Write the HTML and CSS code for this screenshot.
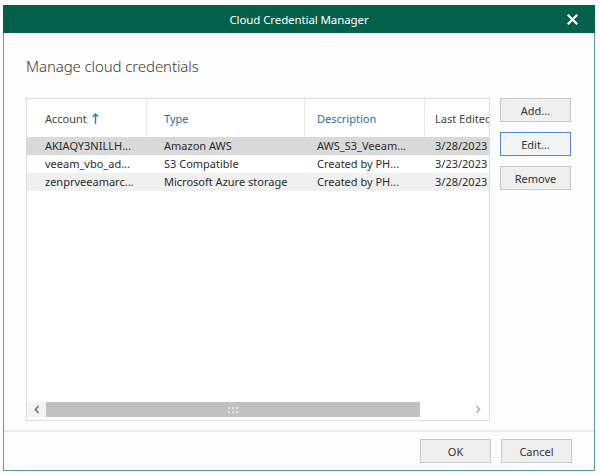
FILE: index.html
```html
<!DOCTYPE html>
<html>
<head>
<meta charset="utf-8">
<link rel="stylesheet" href="styles.css">
</head>
<body>
<div class="window">
  <div class="titlebar">
    <span class="title">Cloud Credential Manager</span>
    <span class="close">
      <svg width="11" height="11" viewBox="0 0 11 11"><path d="M1.5 1.5 L9.5 9.5 M9.5 1.5 L1.5 9.5" stroke="#fff" stroke-width="2.2" stroke-linecap="square"/></svg>
    </span>
  </div>
  <div class="content">
    <h1 class="heading">Manage cloud credentials</h1>
    <div class="main">
      <div class="list">
        <div class="grid">
          <div class="row header">
            <div class="cell c1 hdr-dark">Account <svg class="arrow" width="7" height="11" viewBox="0 0 7 11"><path d="M3.5 1 V11 M0.8 3.8 L3.5 1 L6.2 3.8" fill="none" stroke="#2a7ec4" stroke-width="1.4"/></svg></div>
            <div class="cell c2 hdr-blue">Type</div>
            <div class="cell c3 hdr-blue">Description</div>
            <div class="cell c4 hdr-dark">Last Edited</div>
          </div>
          <div class="row item selected">
            <div class="cell c1">AKIAQY3NILLH...</div>
            <div class="cell c2">Amazon AWS</div>
            <div class="cell c3">AWS_S3_Veeam...</div>
            <div class="cell c4">3/28/2023 9:14 AM</div>
          </div>
          <div class="row item">
            <div class="cell c1">veeam_vbo_ad...</div>
            <div class="cell c2">S3 Compatible</div>
            <div class="cell c3">Created by PH...</div>
            <div class="cell c4">3/23/2023 11:02 AM</div>
          </div>
          <div class="row item hover">
            <div class="cell c1">zenprveeamarc...</div>
            <div class="cell c2">Microsoft Azure storage</div>
            <div class="cell c3">Created by PH...</div>
            <div class="cell c4">3/28/2023 9:20 AM</div>
          </div>
        </div>
        <div class="hscroll">
          <div class="sarrow left">
            <svg width="6" height="9" viewBox="0 0 6 9"><path d="M4.5 1 L1.5 4.5 L4.5 8" fill="none" stroke="#707070" stroke-width="1.6"/></svg>
          </div>
          <div class="thumb">
            <svg width="10" height="6" viewBox="0 0 10 6">
              <rect x="0" y="0" width="2" height="2" fill="#e8e8e8"/><rect x="4" y="0" width="2" height="2" fill="#e8e8e8"/><rect x="8" y="0" width="2" height="2" fill="#e8e8e8"/>
              <rect x="0" y="4" width="2" height="2" fill="#e8e8e8"/><rect x="4" y="4" width="2" height="2" fill="#e8e8e8"/><rect x="8" y="4" width="2" height="2" fill="#e8e8e8"/>
            </svg>
          </div>
          <div class="track"></div>
          <div class="sarrow right">
            <svg width="6" height="9" viewBox="0 0 6 9"><path d="M1.5 1 L4.5 4.5 L1.5 8" fill="none" stroke="#b0b0b0" stroke-width="1.6"/></svg>
          </div>
        </div>
      </div>
      <div class="side">
        <button class="btn">Add...</button>
        <button class="btn focus">Edit...</button>
        <button class="btn">Remove</button>
      </div>
    </div>
  </div>
  <div class="footer">
    <button class="btn">OK</button>
    <button class="btn">Cancel</button>
  </div>
</div>
</body>
</html>
```
FILE: styles.css
```css
html, body {
  margin: 0;
  padding: 0;
  background: #ffffff;
}
body {
  font-family: "Noto Sans", "Open Sans", sans-serif;
  color: #333;
}
.window {
  margin: 5px 0 0 3px;
  width: 590px;
  height: 465px;
  border: 1px solid #5b9e92;
  border-top: none;
  background: #fdfdfd;
  display: flex;
  flex-direction: column;
}
.titlebar {
  height: 28px;
  margin: 0 -1px;
  background: #03604b;
  display: flex;
  align-items: center;
  justify-content: center;
  position: relative;
}
.title {
  color: #fff;
  font-size: 11.5px;
  letter-spacing: -0.1px;
}
.close {
  position: absolute;
  right: 17px;
  top: 9px;
  width: 11px;
  height: 11px;
  display: flex;
}
.content {
  flex: 1;
  padding: 23px 0 0 22px;
  display: flex;
  flex-direction: column;
}
.heading {
  margin: 0;
  font-size: 15px;
  font-weight: 300;
  line-height: 20px;
  color: #3a3a3a;
  letter-spacing: -0.1px;
}
.main {
  margin-top: 22px;
  display: flex;
  gap: 10px;
}
.list {
  width: 462px;
  height: 321px;
  border: 1px solid #dcdcdc;
  background: #fff;
  display: flex;
  flex-direction: column;
  overflow: hidden;
}
.grid {
  flex: 1;
  overflow: hidden;
}
.row {
  display: flex;
  white-space: nowrap;
  font-size: 11px;
}
.row.header {
  height: 38px;
  align-items: center;
}
.row.header .cell {
  height: 38px;
  line-height: 39px;
  border-right: 1px solid #e8e8e8;
}
.row.item {
  height: 18px;
  line-height: 18px;
  color: #2b2b2b;
}
.row.selected { background: #d9d9d9; }
.row.hover { background: #f0f0f0; }
.cell {
  overflow: hidden;
  flex: none;
  box-sizing: border-box;
}
.c1 { width: 120px; padding-left: 18px; }
.c2 { width: 158px; padding-left: 17px; }
.c3 { width: 120px; padding-left: 12px; }
.c4 { width: 64px; padding-left: 10px; }
.row.header .c4 { border-right: none; }
.hdr-dark { color: #444; }
.hdr-blue { color: #2a6ea8; }
.arrow {
  margin-left: 2px;
  vertical-align: -1px;
}
.hscroll {
  height: 15px;
  margin-bottom: 3px;
  display: flex;
}
.sarrow {
  width: 19px;
  display: flex;
  align-items: center;
  justify-content: center;
}
.sarrow.left { background: #f4f4f4; }
.sarrow.right { width: 22px; }
.thumb {
  width: 374px;
  background: #c1c1c1;
  display: flex;
  align-items: center;
  justify-content: center;
}
.track {
  flex: 1;
  background: #fff;
}
.side {
  display: flex;
  flex-direction: column;
  gap: 10px;
}
.btn {
  width: 71px;
  height: 24px;
  padding: 0;
  background: #efefef;
  border: 1px solid #c8c8c8;
  font-family: "Noto Sans", "Open Sans", sans-serif;
  font-size: 11px;
  color: #333;
}
.btn.focus {
  border-color: #4b8ccc;
  background: #f2f4f6;
}
.footer {
  height: 38px;
  border-top: 2px solid #ececec;
  display: flex;
  justify-content: flex-end;
  align-items: center;
  gap: 10px;
  padding-right: 22px;
}
```
